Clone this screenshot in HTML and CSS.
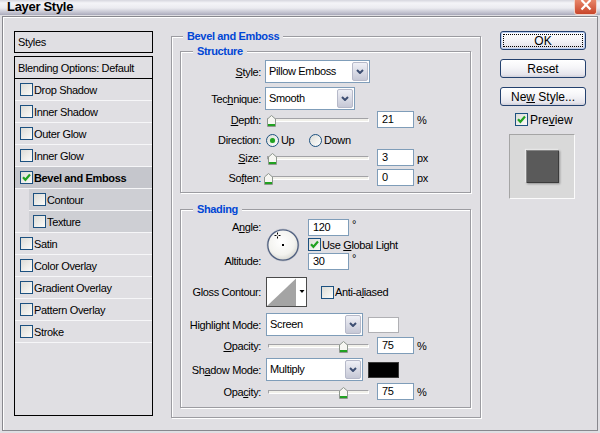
FILE: index.html
```html
<!DOCTYPE html>
<html>
<head>
<meta charset="utf-8">
<title>Layer Style</title>
<link rel="stylesheet" href="styles.css">
</head>
<body>
<div class="titlebar">
  <div class="title">Layer Style</div>
  <div class="close"><svg width="12" height="11" viewBox="0 0 12 11"><path d="M1.5 0 L10.5 9.5 M10.5 0 L1.5 9.5" stroke="#fff" stroke-width="2.2" fill="none"/></svg></div>
</div>
<div class="frame">
  <div class="styles">
    <div class="styles-head">Styles</div>
    <div class="styles-list">
      <div class="row blend"><span>Blending Options: Default</span></div>
      <div class="row"><span class="cb"></span><span>Drop Shadow</span></div>
      <div class="row"><span class="cb"></span><span>Inner Shadow</span></div>
      <div class="row"><span class="cb"></span><span>Outer Glow</span></div>
      <div class="row"><span class="cb"></span><span>Inner Glow</span></div>
      <div class="row active"><span class="cb"><svg width="9" height="9" viewBox="0 0 9 9"><path d="M1 4.2 L3.4 6.8 L8 1.6" fill="none" stroke="#21a121" stroke-width="2.2"/></svg></span><span>Bevel and Emboss</span></div>
      <div class="sub">
        <div class="row"><span class="cb"></span><span>Contour</span></div>
        <div class="row last"><span class="cb"></span><span>Texture</span></div>
      </div>
      <div class="row"><span class="cb"></span><span>Satin</span></div>
      <div class="row"><span class="cb"></span><span>Color Overlay</span></div>
      <div class="row"><span class="cb"></span><span>Gradient Overlay</span></div>
      <div class="row"><span class="cb"></span><span>Pattern Overlay</span></div>
      <div class="row"><span class="cb"></span><span>Stroke</span></div>
    </div>
  </div>

  <div class="group outer">
    <div class="gtitle">Bevel and Emboss</div>

    <div class="group inner structure">
      <div class="gtitle">Structure</div>
      <div class="frow r-style">
        <span class="lbl"><u>S</u>tyle:</span>
        <div class="select w105"><span class="sval">Pillow Emboss</span><span class="sbtn"><svg width="8" height="5" viewBox="0 0 8 5"><path d="M1 1 L4 4 L7 1" fill="none" stroke="#3d4e72" stroke-width="2"/></svg></span></div>
      </div>
      <div class="frow r-tech">
        <span class="lbl">Tec<u>h</u>nique:</span>
        <div class="select w90"><span class="sval">Smooth</span><span class="sbtn"><svg width="8" height="5" viewBox="0 0 8 5"><path d="M1 1 L4 4 L7 1" fill="none" stroke="#3d4e72" stroke-width="2"/></svg></span></div>
      </div>
      <div class="frow r-depth">
        <span class="lbl"><u>D</u>epth:</span>
        <div class="slider s-struct"><div class="track"></div><svg class="thumb" style="left:0px" width="9" height="12" viewBox="0 0 9 12"><path d="M0.5 11.5 V4 L4.5 0.5 L8.5 4 V11.5 Z" fill="#f6f6f2" stroke="#8e978e"/><rect x="1" y="9" width="7" height="2" fill="#21a121"/></svg></div>
        <span class="num n37">21</span><span class="unit">%</span>
      </div>
      <div class="frow r-dir">
        <span class="lbl">Direction:</span>
        <span class="opt opt-up"><span class="radio"><span class="dot"></span></span><span class="otext">Up</span></span>
        <span class="opt"><span class="radio"></span><span class="otext">Down</span></span>
      </div>
      <div class="frow r-size">
        <span class="lbl"><u>S</u>ize:</span>
        <div class="slider s-struct"><div class="track"></div><svg class="thumb" style="left:1px" width="9" height="12" viewBox="0 0 9 12"><path d="M0.5 11.5 V4 L4.5 0.5 L8.5 4 V11.5 Z" fill="#f6f6f2" stroke="#8e978e"/><rect x="1" y="9" width="7" height="2" fill="#21a121"/></svg></div>
        <span class="num n37">3</span><span class="unit">px</span>
      </div>
      <div class="frow r-soft">
        <span class="lbl">So<u>f</u>ten:</span>
        <div class="slider s-struct"><div class="track"></div><svg class="thumb" style="left:-3px" width="9" height="12" viewBox="0 0 9 12"><path d="M0.5 11.5 V4 L4.5 0.5 L8.5 4 V11.5 Z" fill="#f6f6f2" stroke="#8e978e"/><rect x="1" y="9" width="7" height="2" fill="#21a121"/></svg></div>
        <span class="num n37">0</span><span class="unit">px</span>
      </div>
    </div>

    <div class="group inner shading">
      <div class="gtitle">Shading</div>
      <div class="angle">
        <div class="lblcol"><span>A<u>n</u>gle:</span><span>Altitude:</span></div>
        <svg class="dial" width="34" height="34" viewBox="0 0 34 34">
          <defs><radialGradient id="dg" cx="45%" cy="40%" r="62%"><stop offset="0" stop-color="#ffffff"/><stop offset="0.65" stop-color="#f3f3ef"/><stop offset="1" stop-color="#d2d2cc"/></radialGradient></defs>
          <circle cx="17" cy="17" r="16.2" fill="url(#dg)" stroke="#c9cbd3" stroke-width="1"/>
          <circle cx="17" cy="17" r="15.2" fill="none" stroke="#4f5f7f" stroke-width="1.3"/>
          <rect x="16" y="16" width="2" height="2" fill="#000"/>
          <path d="M11.5 4.5 V6.5 M11.5 8.5 V10.5 M8.5 7.5 H10.5 M12.5 7.5 H14.5" stroke="#000" stroke-width="1" fill="none"/>
        </svg>
        <div class="angctl">
          <div class="inrow"><span class="num n41">120</span><span class="deg">°</span></div>
          <div class="cbrow"><span class="cb"><svg width="9" height="9" viewBox="0 0 9 9"><path d="M1 4.2 L3.4 6.8 L8 1.6" fill="none" stroke="#21a121" stroke-width="2.2"/></svg></span><span>Use <u>G</u>lobal Light</span></div>
          <div class="inrow"><span class="num n41">30</span><span class="deg">°</span></div>
        </div>
      </div>
      <div class="frow r-gloss">
        <span class="lbl">Gloss Contour:</span>
        <svg class="contour" width="41" height="30" viewBox="0 0 41 30">
          <rect x="0.5" y="0.5" width="40" height="29" fill="#fff" stroke="#4a4a4a"/>
          <polygon points="1,29 30,1.5 30,29" fill="#a4a4a4"/>
          <polygon points="33.5,13 38.5,13 36,16" fill="#000"/>
        </svg>
        <span class="cbrow aa"><span class="cb"></span><span>Anti-a<u>l</u>iased</span></span>
      </div>
      <div class="frow r-hl">
        <span class="lbl">Highlight Mode:</span>
        <div class="select w97 ml1"><span class="sval">Screen</span><span class="sbtn"><svg width="8" height="5" viewBox="0 0 8 5"><path d="M1 1 L4 4 L7 1" fill="none" stroke="#3d4e72" stroke-width="2"/></svg></span></div>
        <span class="swatch white"></span>
      </div>
      <div class="frow r-op1">
        <span class="lbl"><u>O</u>pacity:</span>
        <div class="slider s-shade"><div class="track"></div><svg class="thumb" style="left:71px" width="9" height="12" viewBox="0 0 9 12"><path d="M0.5 11.5 V4 L4.5 0.5 L8.5 4 V11.5 Z" fill="#f6f6f2" stroke="#8e978e"/><rect x="1" y="9" width="7" height="2" fill="#21a121"/></svg></div>
        <span class="num n37">75</span><span class="unit">%</span>
      </div>
      <div class="frow r-sh">
        <span class="lbl">Sh<u>a</u>dow Mode:</span>
        <div class="select w97 ml1"><span class="sval">Multiply</span><span class="sbtn"><svg width="8" height="5" viewBox="0 0 8 5"><path d="M1 1 L4 4 L7 1" fill="none" stroke="#3d4e72" stroke-width="2"/></svg></span></div>
        <span class="swatch black"></span>
      </div>
      <div class="frow r-op2">
        <span class="lbl">Opa<u>c</u>ity:</span>
        <div class="slider s-shade"><div class="track"></div><svg class="thumb" style="left:71px" width="9" height="12" viewBox="0 0 9 12"><path d="M0.5 11.5 V4 L4.5 0.5 L8.5 4 V11.5 Z" fill="#f6f6f2" stroke="#8e978e"/><rect x="1" y="9" width="7" height="2" fill="#21a121"/></svg></div>
        <span class="num n37">75</span><span class="unit">%</span>
      </div>
    </div>
  </div>

  <div class="side">
    <div class="btn ok"><span class="focus"><span>OK</span></span></div>
    <div class="btn"><span>Reset</span></div>
    <div class="btn"><span>Ne<u>w</u> Style...</span></div>
    <div class="pv"><span class="cb"><svg width="9" height="9" viewBox="0 0 9 9"><path d="M1 4.2 L3.4 6.8 L8 1.6" fill="none" stroke="#21a121" stroke-width="2.2"/></svg></span><span>Pre<u>v</u>iew</span></div>
    <div class="preview"><div class="sample"></div></div>
  </div>
</div>
</body>
</html>
```
FILE: styles.css
```css
* { box-sizing: border-box; }
html, body { margin: 0; padding: 0; }
body {
  width: 600px;
  height: 433px;
  overflow: hidden;
  background: #e0dfe3;
  font-family: "Liberation Sans", Arial, sans-serif;
  font-size: 11px;
  letter-spacing: -0.35px;
  color: #000;
}
u { text-decoration: underline; }

/* title bar */
.titlebar {
  height: 15px;
  display: flex;
  justify-content: space-between;
  background: linear-gradient(#d6d6de 0, #f4f4f8 3px, #ebebf0 8px, #bebecc 13px, #a9a9ba 15px);
}
.title {
  font-size: 13px;
  font-weight: bold;
  line-height: 13px;
  padding-left: 7px;
  letter-spacing: -0.3px;
}
.close {
  width: 23px;
  height: 15px;
  margin-right: 3px;
  background: linear-gradient(#e8866a, #c8452a);
  border: 1px solid #f0d2c8;
  border-top: 0;
  border-radius: 0 0 3px 3px;
  display: flex;
  justify-content: center;
}
.close svg { display: block; }

/* dialog frame */
.frame {
  margin: 1px 2px 2px;
  height: 415px;
  border: 1px solid #88888e;
  box-shadow: inset 1px 1px 0 #fff;
  display: flex;
  align-items: flex-start;
  padding: 14px 0 0 11px;
}

/* styles list */
.styles { width: 139px; flex: none; }
.styles-head {
  height: 22px;
  border: 1px solid #000;
  padding-left: 3px;
  line-height: 20px;
}
.styles-list {
  margin-top: 3px;
  height: 360px;
  border: 1px solid #000;
}
.row {
  height: 22px;
  display: flex;
  align-items: center;
  padding-left: 5px;
  border-bottom: 1px solid #f6f6f8;
}
.row.blend { padding-left: 3px; border-bottom-color: #000; }
.row.active { background: #c5c6cc; font-weight: bold; }
.sub { padding-left: 14px; border-bottom: 1px solid #f6f6f8; }
.sub .row { background: #cecfd4; padding-left: 4px; }
.sub .row.last { height: 21px; border-bottom: 0; }

.cb {
  width: 13px;
  height: 13px;
  flex: none;
  border: 1px solid #1c5180;
  background: linear-gradient(135deg, #dcdcd7, #fbfbf9);
  margin-right: 1px;
  display: flex;
  align-items: center;
  justify-content: center;
}
.cb svg { display: block; }

/* group boxes */
.group {
  border: 1px solid #9c9ca1;
  box-shadow: inset 1px 1px 0 #fff, 1px 1px 0 #fff;
}
.gtitle {
  width: max-content;
  background: #e0dfe3;
  color: #0046d5;
  font-weight: bold;
  line-height: 13px;
  padding: 0 4px;
  margin-top: -7px;
}
.outer {
  width: 310px;
  flex: none;
  margin: 5px 0 0 18px;
  padding: 0 9px 9px 8px;
}
.outer > .gtitle { margin-left: 3px; }
.inner > .gtitle { margin-left: 12px; }
.structure { margin-top: 8px; padding-bottom: 6px; }
.shading { margin-top: 16px; padding-bottom: 7px; }

/* form rows */
.frow { display: flex; align-items: center; }
.lbl { width: 80px; flex: none; text-align: right; margin-right: 4px; }
.r-style { margin-top: 2px; height: 23px; }
.r-tech { margin-top: 4px; height: 23px; }
.r-depth { margin-top: 1px; height: 17px; }
.r-dir { margin-top: 3px; height: 18px; }
.r-size { height: 17px; }
.r-soft { margin-top: 3px; height: 17px; }
.r-gloss { margin-top: 7px; height: 30px; }
.r-hl { margin-top: 6px; height: 23px; }
.r-op1 { margin-top: 1px; height: 17px; }
.r-sh { margin-top: 4px; height: 23px; }
.r-op2 { margin-top: 2px; height: 17px; }

/* select */
.select {
  display: flex;
  height: 23px;
  flex: none;
  border: 1px solid #7f9db9;
  background: #fff;
}
.sval { flex: 1; padding-left: 3px; line-height: 21px; }
.sbtn {
  width: 16px;
  margin: 1px;
  border: 1px solid #b6b9c9;
  border-radius: 2px;
  background: linear-gradient(#eff0f6, #c6c8d6);
  display: flex;
  align-items: center;
  justify-content: center;
}
.sbtn svg { display: block; }
.w105 { width: 105px; }
.w90 { width: 90px; }
.w97 { width: 97px; }
.ml1 { margin-left: 1px; }

/* slider */
.slider { position: relative; height: 17px; flex: none; }
.track {
  margin-top: 7px;
  height: 4px;
  border-top: 1px solid #a2a2a6;
  border-left: 1px solid #a2a2a6;
  border-bottom: 1px solid #fff;
  border-right: 1px solid #fff;
  background: #f1f0ea;
}
.thumb { position: absolute; top: 4px; display: block; }
.s-struct { width: 102px; margin-left: 2px; }
.s-shade { width: 101px; margin-left: 3px; }

/* number boxes */
.num {
  height: 17px;
  flex: none;
  border: 1px solid #7f9db9;
  background: #fff;
  padding-left: 4px;
  line-height: 15px;
}
.n37 { width: 37px; margin-left: 8px; }
.n41 { width: 41px; }
.unit { margin-left: 3px; }

/* radios */
.opt { display: flex; align-items: center; }
.opt-up { width: 43px; margin-left: 1px; }
.radio {
  width: 13px;
  height: 13px;
  flex: none;
  border-radius: 50%;
  border: 1px solid #1c5180;
  background: linear-gradient(135deg, #dcdcd7, #fff);
  display: flex;
  align-items: center;
  justify-content: center;
}
.dot {
  width: 5px;
  height: 5px;
  border-radius: 50%;
  background: #21a121;
  box-shadow: 0 0 1px #8ee08e;
}
.otext { margin-left: 2px; }

/* angle block */
.angle { display: flex; height: 51px; margin-top: 3px; }
.lblcol {
  width: 80px;
  flex: none;
  margin-right: 4px;
  display: flex;
  flex-direction: column;
  justify-content: space-between;
  text-align: right;
}
.lblcol span { line-height: 17px; }
.dial { margin: 9px 0 0 1px; display: block; flex: none; }
.angctl {
  margin-left: 8px;
  display: flex;
  flex-direction: column;
  justify-content: space-between;
}
.inrow { display: flex; height: 17px; }
.deg { margin-left: 3px; line-height: 11px; }
.cbrow { display: flex; align-items: center; height: 13px; }
.cbrow .cb { margin-right: 1px; }

.contour { display: block; margin-left: 1px; flex: none; }
.aa { margin-left: 14px; }

.swatch { width: 31px; height: 16px; margin-left: 5px; flex: none; border: 1px solid #b0b0b4; }
.swatch.white { background: #fff; }
.swatch.black { background: #000; border-color: #3a3a3a; }

/* right column */
.side {
  width: 116px;
  flex: none;
  display: flex;
  flex-direction: column;
  font-size: 12px;
  letter-spacing: 0;
}
.btn {
  width: 86px;
  height: 19px;
  margin-left: 19px;
  border: 1px solid #24416e;
  border-radius: 3px;
  background: linear-gradient(#ffffff 0, #f5f5f8 45%, #e6e5ec 85%, #d0d0da 100%);
  display: flex;
  align-items: center;
  justify-content: center;
}
.btn + .btn { margin-top: 9px; }
.btn.ok { padding: 2px; box-shadow: inset 0 0 0 1px #b9cdf0; }
.focus {
  flex: 1;
  align-self: stretch;
  border: 1px dotted #000;
  display: flex;
  align-items: center;
  justify-content: center;
}
.pv {
  margin: 5px 0 0 34px;
  height: 17px;
  display: flex;
  align-items: center;
}
.pv .cb { margin-right: 2px; }
.preview {
  margin: 6px 0 0 28px;
  width: 66px;
  height: 65px;
  background: #d9d9d9;
  border: 1px solid;
  border-color: #a5a5a5 #fbfbfb #fbfbfb #a5a5a5;
  display: flex;
  align-items: center;
  justify-content: center;
}
.sample {
  width: 33px;
  height: 33px;
  background: #5a5a5a;
  box-shadow: inset 1px 1px 0 #858585, inset -1px -1px 0 #3b3b3b, 1px 1px 2px rgba(0,0,0,0.35), -1px -1px 1px rgba(255,255,255,0.5);
}
```
